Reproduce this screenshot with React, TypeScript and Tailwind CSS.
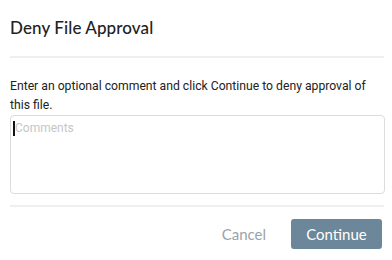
export default function App() {
  return (
    <div className="w-[392px] h-[260px] bg-white px-[10px] font-['Roboto',sans-serif]">
      <div className="h-[56px] flex items-center">
        <h1 className="text-[17px] text-[#222] font-['Lato',sans-serif] font-medium tracking-[0.1px]">
          Deny File Approval
        </h1>
      </div>
      <div className="h-[2px] w-[374px] bg-[#efefef]" />
      <p className="mt-[19px] text-[12.2px] leading-[19px] text-[#222] w-[374px]">
        Enter an optional comment and click Continue to deny approval of this file.
      </p>
      <div className="mt-[0px] w-[375px] h-[79px] border border-[#dcdcdc] rounded-[4px] px-[2px] pt-[4px] flex items-start">
        <span className="mt-[1px] w-[2px] h-[15px] bg-[#111]" />
        <span className="text-[12px] leading-[17px] text-[#c6c6c6]">Comments</span>
      </div>
      <div className="mt-[11px] h-[2px] w-[374px] bg-[#efefef]" />
      <div className="mt-[12px] w-[372px] flex items-center justify-end gap-[25px]">
        <button className="text-[15px] text-[#9aa3ab] font-['Lato',sans-serif]">Cancel</button>
        <button className="w-[91px] h-[30px] rounded-[3px] bg-[#6b8799] text-white text-[15px] font-['Lato',sans-serif]">
          Continue
        </button>
      </div>
    </div>
  );
}
